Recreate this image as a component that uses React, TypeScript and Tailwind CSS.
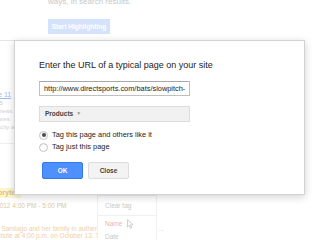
import { useState } from 'react';

const font = { fontFamily: '"Liberation Sans", Arial, sans-serif' };

function Radio({ checked, label, onClick }: { checked: boolean; label: string; onClick: () => void }) {
  return (
    <button onClick={onClick} className="flex items-center h-[12px] text-left">
      <span className="w-[9px] h-[9px] rounded-full border border-[#c4c4c4] bg-white flex items-center justify-center shadow-[inset_0_1px_1px_rgba(0,0,0,0.08)]">
        {checked && <span className="w-[4px] h-[4px] rounded-full bg-[#4a4a4a]" />}
      </span>
      <span className="ml-[4px] text-[7.4px] text-[#222]">{label}</span>
    </button>
  );
}

export default function App() {
  const [mode, setMode] = useState<'similar' | 'single'>('similar');
  const [url, setUrl] = useState('http://www.directsports.com/bats/slowpitch-softball-bats');

  return (
    <div className="relative w-[320px] h-[240px] overflow-hidden bg-white" style={font}>
      {/* faded page behind the dialog */}
      <div className="pl-[48px] -mt-[4px]">
        <p className="text-[8px] leading-[12px] text-[#c9c9c9]">ways, in search results.</p>
        <div className="mt-[11px] w-[62px] h-[15px] bg-[#d4e3fb] text-white text-[6.5px] font-bold flex items-center justify-center">
          Start Highlighting
        </div>
      </div>
      <div className="mt-[6px] w-[60px] border-t border-[#e6e6e6]">
        <div className="h-[50px]" />
        <div className="-ml-[14px] text-[7px] leading-[8px]">
          <p className="text-[#9db6ec] underline">Price 11</p>
          <p className="text-[#b5d6b5] text-[6px]">92525</p>
          <p className="text-[#d2d2d2] text-[5.5px]">95 reviews</p>
          <p className="text-[#d2d2d2] text-[6px]">Features</p>
          <p className="text-[#d2d2d2] text-[6px]">Capacity a</p>
        </div>
        <div className="mt-[12px] border-t border-[#eeeeee]" />
        <div className="h-[44px]" />
        <div className="-ml-[9px] w-fit bg-[#fdf4d0] text-[#d9c27a] text-[7px] leading-[10px] font-bold">Storytelli</div>
        <p className="mt-[3px] -ml-[4px] w-[80px] text-[6.5px] leading-[9px] text-[#d8c9a6]">2012 4:00 PM - 5:00 PM</p>
        <div className="mt-[15px] -ml-[4px] w-[300px] text-[6.5px] leading-[7px] text-[#efcfa6]">
          <p>e Santiago and her family in authentic Peruvian dances, ...</p>
          <p>istsite at 4:00 p.m. on October 13. This event is free</p>
        </div>
      </div>

      {/* context menu that was open behind */}
      <div className="absolute left-[97px] top-[195px] w-[60px] h-[50px] bg-white border border-[#f0f0f0] text-[6.5px] leading-[8px] text-[#c8c8c8]">
        <p className="pl-[7px] pt-[6px]">Clear tag</p>
        <div className="mt-[5px] border-t border-[#f0f0f0]" />
        <p className="pl-[7px] mt-[4px] text-[#f3b0a6]">Name</p>
        <p className="pl-[7px] mt-[5px]">Date</p>
        <svg className="absolute left-[29px] top-[23px]" width="7" height="10" viewBox="0 0 7 10">
          <path d="M0.5 0.5 L0.5 8 L2.3 6.3 L3.6 9.3 L4.7 8.8 L3.4 5.9 L6 5.9 Z" fill="#fff" stroke="#c4c4c4" strokeWidth="0.8" />
        </svg>
      </div>

      {/* dialog */}
      <div className="absolute left-[14px] top-[40px] w-[291px] h-[155px] bg-white border border-[#d2d2d2] shadow-[0_2px_8px_rgba(0,0,0,0.18)] pl-[24px] pt-[19px]">
        <h2 className="text-[9px] leading-[11px] text-[#222]">Enter the URL of a typical page on your site</h2>
        <input
          value={url}
          onChange={(e) => setUrl(e.target.value)}
          className="block mt-[10px] w-[151px] h-[15px] px-[4px] border border-[#c0c0c0] border-t-[#a8a8a8] text-[7.4px] text-[#222] outline-none"
          style={font}
        />
        <div className="mt-[10px] w-[151px] h-[16px] bg-[#f1f1f1] border border-[#dcdcdc] flex items-center pl-[5px]">
          <span className="text-[6.5px] font-bold text-[#444]">Products</span>
          <span className="ml-[3px] text-[5px] text-[#999]">▼</span>
        </div>
        <div className="mt-[7px] flex flex-col">
          <Radio checked={mode === 'similar'} label="Tag this page and others like it" onClick={() => setMode('similar')} />
          <Radio checked={mode === 'single'} label="Tag just this page" onClick={() => setMode('single')} />
        </div>
        <div className="mt-[9px] ml-[3px] flex gap-[5px]">
          <button className="w-[41px] h-[17px] rounded-[2px] bg-[#4d90fe] border border-[#3079ed] text-white text-[6.5px] font-bold">OK</button>
          <button className="w-[41px] h-[17px] rounded-[2px] bg-[#f3f3f3] border border-[#dcdcdc] text-[#444] text-[6.5px] font-bold">Close</button>
        </div>
      </div>
    </div>
  );
}
